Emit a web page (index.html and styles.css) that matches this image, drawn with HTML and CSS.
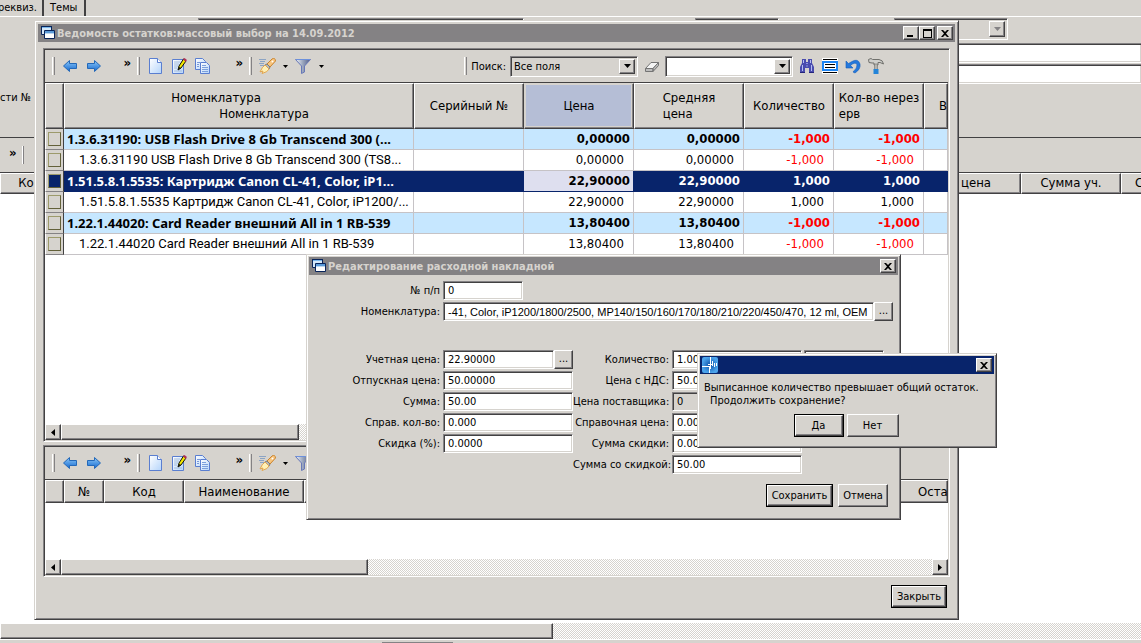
FILE: index.html
```html
<!DOCTYPE html>
<html lang="ru">
<head>
<meta charset="utf-8">
<title>Ведомость остатков</title>
<link rel="stylesheet" href="styles.css">
</head>
<body>
<svg class="sprite" aria-hidden="true">
  <defs>
    <linearGradient id="g-blue" x1="0" y1="0" x2="0" y2="1"><stop offset="0" stop-color="#8cc8f8"/><stop offset="1" stop-color="#1468d0"/></linearGradient>
    <linearGradient id="g-page" x1="0" y1="0" x2="1" y2="1"><stop offset="0" stop-color="#ffffff"/><stop offset="1" stop-color="#b4d4fa"/></linearGradient>
    <linearGradient id="g-steel" x1="0" y1="0" x2="1" y2="0"><stop offset="0" stop-color="#f0f4fa"/><stop offset=".5" stop-color="#98a4bc"/><stop offset="1" stop-color="#505c88"/></linearGradient>
    <radialGradient id="g-app"><stop offset="0" stop-color="#0c50a8"/><stop offset="1" stop-color="#4ca4ec"/></radialGradient>
  </defs>
  <symbol id="windows" viewBox="0 0 16 16"><path d="M1.500 1.500h10v8h-10z" fill="#d6e8f8" stroke="#08245a"/><path d="M1 1h11v2H1z" fill="#08245a"/><path d="M2 2h9v1H2z" fill="#7bb8ec"/><path d="M4.500 5.500h10v8h-10z" fill="#fff" stroke="#08245a"/><path d="M5 6h9v2H5z" fill="#5a9ad8"/><path d="M5 8h9v1H5z" fill="#bcd8f0"/></symbol>
  <symbol id="left" viewBox="0 0 16 16"><path d="M1.500 8L7.500 2.500V5.500H14.500V10.500H7.500V13.500Z" fill="url(#g-blue)" stroke="#2468b8"/></symbol>
  <symbol id="right" viewBox="0 0 16 16"><path d="M14.500 8L8.500 2.500V5.500H1.500V10.500H8.500V13.500Z" fill="url(#g-blue)" stroke="#2468b8"/></symbol>
  <symbol id="page" viewBox="0 0 16 16"><path d="M2.500.5H10.500L14.500 4.500V15.500H2.500Z" fill="url(#g-page)" stroke="#5a7ed0"/><path d="M10.500.5V4.500H14.500" fill="#fff" stroke="#5a7ed0"/></symbol>
  <symbol id="edit" viewBox="0 0 16 16"><path d="M1.500 1.500H12.500V15.500H1.500Z" fill="url(#g-page)" stroke="#5a7ed0"/><path d="M3 4h6M3 6h5M3 8h4M3 10h3M3 13h8" stroke="#a4bcdc"/><path d="M7 12L8 8 12.500 1 15 3 10 10Z" fill="#f4e800" stroke="#101008"/><path d="M12 1L13.500 0 16 2 14.500 4Z" fill="#b03058"/><path d="M7 12l1-3 2 1z" fill="#101008"/></symbol>
  <symbol id="copy" viewBox="0 0 16 16"><path d="M.5.5H7.500L10.500 3.500V11.500H.5Z" fill="url(#g-page)" stroke="#5a7ed0"/><path d="M2 4.500h3M2 6.500h2M2 8.500h2" stroke="#7898d8"/><path d="M5.500 4.500H11.500L14.500 7.500V15.500H5.500Z" fill="url(#g-page)" stroke="#5a7ed0"/><path d="M7 7.500h4M7 9.500h6M7 11.500h6M7 13.500h6" stroke="#7ca0dc"/></symbol>
  <symbol id="brush" viewBox="0 0 18 16"><path d="M1 1.500h7M2 3.500h5M1 5.500h5M2 7.500h4" stroke="#8ca4c4"/><path d="M9 6L14 1Q17-1 17.500 3L12 9Z" fill="#f8c47c" stroke="#c88430"/><path d="M7 7l2-1 3 3-1 2z" fill="#b4b8bc" stroke="#7c7c78"/><path d="M7 7Q4 9 2 14l3-1-1 2.500Q10 14 11 11Z" fill="#fff0b4" stroke="#e0a450"/><circle cx="14.500" cy="3.500" r="1" fill="#fff"/></symbol>
  <symbol id="funnel" viewBox="0 0 16 16"><path d="M.5 1.500H15.500L9.500 8V14L6.500 15.500V8Z" fill="url(#g-steel)" stroke="#6878b8"/><path d="M1 1.500h14" stroke="#6c90dc"/></symbol>
  <symbol id="eraser" viewBox="0 0 16 16"><path d="M1.500 10.500L7 4.500H14.500L9 10.500Z" fill="#f4f4f4" stroke="#747474"/><path d="M1.500 10.500H9V13.500H1.500ZM9 10.500L14.500 4.500V7.500L9 13.500Z" fill="#bdbdbd" stroke="#747474"/></symbol>
  <symbol id="find" viewBox="0 0 16 16"><path d="M3 1h4v3h2V1h4v4l2 4v6h-5v-5H6v5H1V9l2-4z" fill="#4a4cae"/><path d="M4.500 2v3M11.500 2v3M3.500 7v6M12.500 7v6" stroke="#b4bcf4" fill="none"/><path d="M7 5.500h2M7 8h2" stroke="#8c94e0"/><path d="M1 14.500h5M10 14.500h5" stroke="#24247c"/></symbol>
  <symbol id="list" viewBox="0 0 16 16"><path d="M0 0h16v16H0z" fill="#fff"/><path d="M1 1.500h14M1 14.500h14" stroke="#000"/><path d="M0 3h16v10H0z" fill="#1c84f4"/><path d="M2 5h12v6H2z" fill="#fff"/><path d="M3 6.500h10M3 9.500h10" stroke="#000"/></symbol>
  <symbol id="undo" viewBox="0 0 16 16"><path d="M1 3v7h7L5.500 7.500Q10 3.500 12 6.500 12.500 10 8 14L10 15Q16 11 15 6 13 0 7 3.500L3.500 5.500Z" fill="#2478dc" stroke="#145cb8" stroke-width=".6"/></symbol>
  <symbol id="hammer" viewBox="0 0 16 16"><path d="M.5 1.500L3 .5 4.500 1.500H11Q15 2 15.500 6L12 4.500H10V7H6V5H4L1 4.500Z" fill="#d0d0cc" stroke="#70706c"/><path d="M6.500 6h3v6h-3z" fill="#b4b4b0" stroke="#70706c" stroke-width=".6"/><path d="M5.500 11h5v5h-5z" fill="#2484d8"/></symbol>
  <symbol id="down" viewBox="0 0 7 4"><path d="M0 0h7L3.500 4z" fill="currentColor"/></symbol>
  <symbol id="drop" viewBox="0 0 5 3"><path d="M0 0h5L2.500 3z" fill="currentColor"/></symbol>
  <symbol id="sleft" viewBox="0 0 4 7"><path d="M4 0v7L0 3.500z"/></symbol>
  <symbol id="sright" viewBox="0 0 4 7"><path d="M0 0v7l4-3.500z"/></symbol>
  <symbol id="close" viewBox="0 0 8 7"><path d="M0 0h2l2 2 2-2h2L5 3.500 8 7H6L4 5 2 7H0l3-3.500z"/></symbol>
  <symbol id="min" viewBox="0 0 8 7"><path d="M0 5h6v2H0z"/></symbol>
  <symbol id="max" viewBox="0 0 9 9"><path d="M0 0h9v9H0zM1 2v6h7V2z" fill-rule="evenodd"/></symbol>
  <symbol id="app" viewBox="0 0 16 16"><rect width="16" height="16" rx="2" fill="url(#g-app)"/><path d="M8.500 0v5M7.500 10v6M0 9.500h7M6 7.500h4M5 9.500h3M8.500 5v7M10.500 4v5M12.500 6v4M14.500 6v3" stroke="#fff" fill="none"/></symbol>
</svg>

<main class="app">
  <nav class="tabs">
    <a class="tab tab-cut" href="#rekviz"><span>реквиз.</span></a>
    <a class="tab" href="#themes">Темы</a>
  </nav>
  <section class="doc-form">
    <span class="doc-label">сти №</span>
    <div class="doc-fields">
      <div class="doc-row">
        <div class="field combo off doc-a"><select disabled aria-label="Вид"><option></option></select><span class="btn arrow"><svg><use href="#down"/></svg></span></div>
        <div class="field off doc-b"></div>
        <div class="field combo off doc-c"><select disabled aria-label="Валюта"><option></option></select><span class="btn arrow"><svg><use href="#down"/></svg></span></div>
      </div>
      <input class="field doc-line" aria-label="Основание">
      <input class="field doc-line" aria-label="Примечание">
    </div>
  </section>
  <div class="doc-tools"><b>»</b><i class="grip"></i></div>
  <div class="doc-head"><span class="hd doc-code">Ко</span><span class="hd doc-price">цена</span><span class="hd doc-sum">Сумма уч.</span><span class="hd doc-rest">С</span></div>
  <div class="doc-body"></div>
  <div class="scroll"><span class="thumb doc-thumb"></span></div>
  <footer class="status"><span></span></footer>
</main>

<section class="window main-window">
  <header class="title"><svg class="ico"><use href="#windows"/></svg><h1>Ведомость остатков:массовый выбор на 14.09.2012</h1>
    <button class="btn cap" aria-label="Свернуть"><svg class="g8"><use href="#min"/></svg></button><button class="btn cap" aria-label="Развернуть"><svg class="g9"><use href="#max"/></svg></button><button class="btn cap cap-close" aria-label="Закрыть окно"><svg class="g8"><use href="#close"/></svg></button>
  </header>
  <div class="main-content">
    <div class="panel">
      <div class="toolbar">
        <i class="grip"></i><button class="tool" aria-label="Назад"><svg><use href="#left"/></svg></button><button class="tool" aria-label="Вперёд"><svg><use href="#right"/></svg></button><button class="more" aria-label="Ещё">»</button>
        <i class="grip"></i><button class="tool" aria-label="Создать"><svg><use href="#page"/></svg></button><button class="tool" aria-label="Изменить"><svg><use href="#edit"/></svg></button><button class="tool" aria-label="Копировать"><svg><use href="#copy"/></svg></button><button class="more more-wide" aria-label="Ещё">»</button>
        <i class="grip"></i><button class="tool" aria-label="Очистить"><svg class="w18"><use href="#brush"/></svg></button><button class="drop" aria-label="Варианты очистки"><svg><use href="#drop"/></svg></button><button class="tool" aria-label="Фильтр"><svg><use href="#funnel"/></svg></button><button class="drop" aria-label="Варианты фильтра"><svg><use href="#drop"/></svg></button>
        <div class="search">
          <i class="grip"></i><label for="where">Поиск:</label>
          <div class="field combo off"><select id="where"><option>Все поля</option></select><span class="btn arrow"><svg><use href="#down"/></svg></span></div>
          <button class="tool erase" aria-label="Стереть"><svg><use href="#eraser"/></svg></button>
          <div class="field combo"><input aria-label="Что искать"><button class="btn arrow" aria-label="Список"><svg><use href="#down"/></svg></button></div>
          <button class="tool" aria-label="Найти"><svg><use href="#find"/></svg></button><button class="tool" aria-label="Строки"><svg><use href="#list"/></svg></button><button class="tool" aria-label="Отменить"><svg><use href="#undo"/></svg></button><button class="tool" aria-label="Настройки"><svg><use href="#hammer"/></svg></button>
        </div>
      </div>
      <div class="grid-area">
        <table class="grid">
          <colgroup><col class="c-mark"><col class="c-name"><col class="c-num"><col class="c-num"><col class="c-num"><col class="c-qty"><col class="c-qty"><col class="c-rest"></colgroup>
          <thead><tr><th class="hd"></th><th class="hd"><span class="shift-l">Номенклатура</span><span class="shift-r">Номенклатура</span></th><th class="hd">Серийный №</th><th class="hd current">Цена</th><th class="hd"><span class="lines">Средняя<br>цена</span></th><th class="hd">Количество</th><th class="hd"><span class="lines">Кол-во нерез<br>ерв</span></th><th class="hd last">Вы</th></tr></thead>
          <tbody>
            <tr class="group"><td class="mark"><i></i></td><td class="name">1.3.6.31190: USB Flash Drive 8 Gb Transcend 300 (...</td><td></td><td class="n">0,00000</td><td class="n">0,00000</td><td class="n neg">-1,000</td><td class="n neg">-1,000</td><td></td></tr>
            <tr><td class="mark"><i></i></td><td class="name sub">1.3.6.31190 USB Flash Drive 8 Gb Transcend 300 (TS8...</td><td></td><td class="n">0,00000</td><td class="n">0,00000</td><td class="n neg">-1,000</td><td class="n neg">-1,000</td><td></td></tr>
            <tr class="group selected"><td class="mark"><i></i></td><td class="name">1.51.5.8.1.5535: Картридж Canon CL-41, Color, iP1...</td><td></td><td class="n focus">22,90000</td><td class="n">22,90000</td><td class="n">1,000</td><td class="n">1,000</td><td></td></tr>
            <tr><td class="mark"><i></i></td><td class="name sub">1.51.5.8.1.5535 Картридж Canon CL-41, Color, iP1200/...</td><td></td><td class="n">22,90000</td><td class="n">22,90000</td><td class="n">1,000</td><td class="n">1,000</td><td></td></tr>
            <tr class="group"><td class="mark"><i></i></td><td class="name">1.22.1.44020: Card Reader внешний All in 1 RB-539</td><td></td><td class="n">13,80400</td><td class="n">13,80400</td><td class="n neg">-1,000</td><td class="n neg">-1,000</td><td></td></tr>
            <tr><td class="mark"><i></i></td><td class="name sub">1.22.1.44020 Card Reader внешний All in 1 RB-539</td><td></td><td class="n">13,80400</td><td class="n">13,80400</td><td class="n neg">-1,000</td><td class="n neg">-1,000</td><td></td></tr>
          </tbody>
        </table>
      </div>
      <div class="scroll"><button class="btn step" aria-label="Влево"><svg><use href="#sleft"/></svg></button><span class="thumb thumb-a"></span><button class="btn step step-end" aria-label="Вправо"><svg><use href="#sright"/></svg></button></div>
    </div>
    <div class="panel">
      <div class="toolbar">
        <i class="grip"></i><button class="tool" aria-label="Назад"><svg><use href="#left"/></svg></button><button class="tool" aria-label="Вперёд"><svg><use href="#right"/></svg></button><button class="more" aria-label="Ещё">»</button>
        <i class="grip"></i><button class="tool" aria-label="Создать"><svg><use href="#page"/></svg></button><button class="tool" aria-label="Изменить"><svg><use href="#edit"/></svg></button><button class="tool" aria-label="Копировать"><svg><use href="#copy"/></svg></button><button class="more more-wide" aria-label="Ещё">»</button>
        <i class="grip"></i><button class="tool" aria-label="Очистить"><svg class="w18"><use href="#brush"/></svg></button><button class="drop" aria-label="Варианты очистки"><svg><use href="#drop"/></svg></button><button class="tool" aria-label="Фильтр"><svg><use href="#funnel"/></svg></button>
      </div>
      <div class="grid-area">
        <table class="grid grid-low">
          <colgroup><col class="c-mark"><col class="c-no"><col class="c-code"><col class="c-title"><col><col class="c-tail"></colgroup>
          <thead><tr><th class="hd"></th><th class="hd">№</th><th class="hd">Код</th><th class="hd">Наименование</th><th class="hd"></th><th class="hd tail">Оста</th></tr></thead>
        </table>
      </div>
      <div class="scroll"><button class="btn step" aria-label="Влево"><svg><use href="#sleft"/></svg></button><span class="thumb thumb-b"></span><button class="btn step step-end" aria-label="Вправо"><svg><use href="#sright"/></svg></button></div>
    </div>
    <div class="actions"><button class="default"><span class="btn">Закрыть</span></button></div>
  </div>
</section>

<section class="window edit-window">
  <header class="title"><svg class="ico"><use href="#windows"/></svg><h2>Редактирование расходной накладной</h2><button class="btn cap cap-close" aria-label="Закрыть окно"><svg class="g8"><use href="#close"/></svg></button></header>
  <form class="form">
    <div class="form-top">
      <label for="num">№ п/п</label><input id="num" class="field num" value="0">
      <label for="item">Номенклатура:</label><div class="pick"><input id="item" class="field item" value="-41, Color, iP1200/1800/2500, MP140/150/160/170/180/210/220/450/470, 12 ml, OEM"><button type="button" class="btn dots" aria-label="Выбрать номенклатуру">...</button></div>
    </div>
    <div class="form-cols">
      <label for="f1">Учетная цена:</label><div class="pick"><input id="f1" class="field" value="22.90000"><button type="button" class="btn dots" aria-label="Выбрать цену">...</button></div>
      <label for="q1">Количество:</label><input id="q1" class="field" value="1.000"><div class="field combo unit"><select aria-label="Единица"><option></option></select><span class="btn arrow"><svg><use href="#down"/></svg></span></div>
      <label for="f2">Отпускная цена:</label><input id="f2" class="field" value="50.00000"><label for="q2">Цена с НДС:</label><input id="q2" class="field" value="50.00000">
      <label for="f3">Сумма:</label><input id="f3" class="field" value="50.00"><label for="q3">Цена поставщика:</label><input id="q3" class="field off" value="0" readonly>
      <label for="f4">Справ. кол-во:</label><input id="f4" class="field" value="0.000"><label for="q4">Справочная цена:</label><input id="q4" class="field" value="0.00000">
      <label for="f5">Скидка (%):</label><input id="f5" class="field" value="0.0000"><label for="q5">Сумма скидки:</label><input id="q5" class="field" value="0.00">
      <label class="second" for="q6">Сумма со скидкой:</label><input id="q6" class="field" value="50.00">
    </div>
    <div class="form-actions"><button type="button" class="default"><span class="btn">Сохранить</span></button><button type="button" class="btn push">Отмена</button></div>
  </form>
</section>

<section class="window message" role="alertdialog" aria-labelledby="msg">
  <header class="title active"><svg class="ico"><use href="#app"/></svg><button class="btn cap cap-close" aria-label="Закрыть окно"><svg class="g8"><use href="#close"/></svg></button></header>
  <p id="msg" class="msg">Выписанное количество превышает общий остаток.<br><span>Продолжить сохранение?</span></p>
  <div class="msg-actions"><button class="default"><span class="btn">Да</span></button><button class="btn push">Нет</button></div>
</section>
</body>
</html>
```

FILE: styles.css
```css
:root {
  --face: #d6d3ce;
  --shade: #848284;
  --dark: #424142;
  --navy: #08246b;
}
* { box-sizing: border-box; }
body {
  margin: 0;
  height: 100vh;
  overflow: hidden;
  position: relative;
  background: var(--face);
  color: #000;
  font: 11px/13px "DejaVu Sans Condensed", "Noto Sans", sans-serif;
}
h1, h2, p { margin: 0; font-size: inherit; }
svg { display: block; flex: none; }
button, input, select { font: inherit; color: inherit; margin: 0; padding: 0; border: 0; background: none; border-radius: 0; outline: 0; }
select { appearance: none; opacity: 1; }
.sprite { position: absolute; width: 0; height: 0; }

/* Raised and sunken surfaces */
.btn {
  display: flex;
  align-items: center;
  justify-content: center;
  background: var(--face);
  border: 1px solid;
  border-color: #fff var(--dark) var(--dark) #fff;
  box-shadow: inset -1px -1px var(--shade);
}
.field {
  border: 1px solid;
  border-color: var(--shade) #fff #fff var(--shade);
  box-shadow: inset 1px 1px var(--dark), inset -1px -1px var(--face);
  background: #fff;
  height: 19px;
  min-width: 0;
  padding: 0 4px;
}
.off { background: var(--face); }
.combo { display: flex; height: 21px; padding: 2px; }
.combo select, .combo input { flex: 1; min-width: 0; padding-left: 1px; }
.arrow { width: 16px; flex: none; }
.arrow svg { width: 7px; height: 4px; }
.doc-row .arrow { color: var(--shade); }
.default { border: 1px solid #000; display: flex; height: 23px; }
.default .btn { flex: 1; align-self: stretch; }
.push { height: 23px; }
.grip { width: 3px; height: 18px; border-left: 1px solid #fff; border-right: 1px solid var(--shade); flex: none; }
.hd {
  background: var(--face);
  border: 1px solid;
  border-color: #fff var(--dark) var(--dark) #fff;
  box-shadow: inset -1px -1px var(--shade);
  font-size: 13px;
  line-height: 16px;
  font-weight: normal;
}

/* Document behind the windows */
.app { height: 100%; display: flex; flex-direction: column; }
.tabs { display: flex; height: 17px; border-bottom: 1px solid #fff; }
.tab { color: inherit; text-decoration: none; width: 42px; padding-left: 6px; line-height: 16px; border-right: 2px solid var(--dark); }
.tab-cut { width: 44px; padding: 0 5px 0 0; display: flex; justify-content: flex-end; }
.doc-form { display: flex; height: 120px; padding-top: 1px; }
.doc-label { width: 198px; padding-top: 73px; }
.doc-fields { flex: 1; display: flex; flex-direction: column; }
.doc-row { display: flex; height: 25px; }
.doc-row .field { height: 22px; }
.doc-a { width: 326px; }
.doc-b { width: 84px; margin-left: 171px; }
.doc-c { width: 114px; margin-left: 115px; }
.doc-line { height: 20px; margin-bottom: 1px; border-right: 0; }
.doc-tools { display: flex; gap: 5px; height: 35px; border-top: 1px solid var(--dark); padding: 8px 0 0 9px; font-size: 13px; }
.doc-tools .grip { width: 2px; }
.doc-head { display: flex; height: 22px; border-top: 1px solid var(--dark); overflow: hidden; }
.doc-head .hd { line-height: 18px; flex: none; text-align: center; }
.doc-code { width: 52px; }
.doc-head .doc-price { flex: 0 0 969px; text-align: right; padding-right: 29px; }
.doc-sum { width: 100px; }
.doc-head .doc-rest { width: 60px; text-align: left; padding-left: 13px; }
.doc-body { flex: 1; background: #fff; }
.status { height: 4px; border-top: 1px solid #fff; padding: 2px 0 0 382px; }
.status span { display: block; width: 71px; height: 1px; background: var(--shade); }

/* Scroll bars */
.scroll { display: flex; height: 16px; flex: none; background: repeating-conic-gradient(#fff 0 25%, var(--face) 0 50%) 0 0 / 2px 2px; }
.thumb { background: var(--face); border: 1px solid; border-color: #fff var(--dark) var(--dark) #fff; box-shadow: inset -1px -1px var(--shade); }
.doc-thumb { width: 553px; }
.thumb-a { width: 238px; }
.thumb-b { width: 307px; }
.step { width: 16px; flex: none; }
.step svg { width: 4px; height: 7px; }
.step-end { margin-left: auto; }

/* Windows */
.window {
  position: absolute;
  background: var(--face);
  border: 1px solid;
  border-color: var(--face) var(--dark) var(--dark) var(--face);
  box-shadow: inset 1px 1px #fff, inset -1px -1px var(--shade);
  padding: 2px;
  display: flex;
  flex-direction: column;
}
.title { display: flex; align-items: center; height: 18px; flex: none; background: var(--shade); color: var(--face); padding: 0 2px; }
.title .ico { width: 16px; height: 16px; }
.active { background: var(--navy); }
.title h1, .title h2 { font-weight: bold; white-space: nowrap; padding-left: 1px; margin-right: auto; }
.cap { width: 16px; height: 14px; color: #000; flex: none; }
.cap-close { margin-left: 2px; }
.active .cap-close { margin-left: auto; }
.g8 { width: 8px; height: 7px; }
.g9 { width: 9px; height: 9px; }
.main-window { left: 34px; top: 20px; width: 925px; height: 600px; padding: 3px; }
.main-content { flex: 1; display: grid; grid-template-rows: minmax(0, 394fr) minmax(0, 132fr) auto; padding: 6px 5px 8px; gap: 3px; min-height: 0; }
.panel {
  border: 1px solid;
  border-color: var(--shade) #fff #fff var(--shade);
  display: flex;
  flex-direction: column;
  padding: 1px;
  background: var(--face);
  box-shadow: inset 1px 1px var(--dark);
  min-width: 0;
}
.toolbar { display: flex; align-items: center; height: 32px; flex: none; padding-left: 7px; }
.tool { width: 24px; height: 24px; display: flex; align-items: center; justify-content: center; flex: none; }
.tool svg { width: 16px; height: 16px; }
.tool svg.w18 { width: 18px; }
.grip + .tool { margin-left: 3px; }
.more { width: 25px; height: 18px; margin-right: 6px; text-align: right; font-weight: bold; font-size: 13px; line-height: 10px; padding-bottom: 6px; }
.more-wide { width: 28px; }
.drop { width: 12px; height: 24px; display: flex; align-items: center; justify-content: center; }
.drop svg { width: 5px; height: 3px; }
.search { display: flex; align-items: center; margin-left: auto; padding-right: 61px; }
.search label { padding: 0 4px; }
.search .combo { width: 128px; }
.search .tool { width: 23px; }
.search .erase { width: 27px; }
.search .combo + .tool:not(.erase) { margin-left: 2px; }

.grid-area { flex: 1; background: #fff; overflow: hidden; border-top: 1px solid var(--dark); min-height: 0; }
.grid { width: 100%; table-layout: fixed; border-collapse: separate; border-spacing: 0; font-size: 13px; line-height: 16px; }
.grid .name { font-family: "Noto Sans", sans-serif; }
.grid th { height: 46px; padding: 0; }
.grid .current { background: #b5bed6; border-color: var(--face) var(--dark) var(--dark) var(--face); box-shadow: inset -1px -1px var(--shade), inset 1px 1px var(--face), inset -2px -2px var(--face); }
.c-mark { width: 19px; }
.c-name { width: 350px; }
.c-num { width: 110px; }
.c-qty { width: 90px; }
.shift-l { display: block; padding-right: 46px; }
.shift-r { display: block; padding-left: 50px; }
.lines { display: inline-block; text-align: left; white-space: nowrap; }
.grid .last { text-align: left; padding-left: 14px; overflow: hidden; }
.grid td { height: 21px; padding: 0 0 0 3px; border: solid #c6c3c6; border-width: 0 1px 1px 0; white-space: nowrap; overflow: hidden; }
.grid .sub { padding-left: 15px; font-family: Roboto, sans-serif; }
.grid .n { text-align: right; padding-right: 9px; }
.group td { background: #c6e7ff; font-weight: bold; }
.grid .group .n { padding-right: 3px; }
.grid .neg { color: #f00; }
.grid .selected td { background: var(--navy); border-color: var(--navy); color: #fff; }
.grid .selected .focus { background: #dedfef; color: #000; }
.grid .mark, .grid .selected .mark { background: var(--face); padding: 2px; border-color: var(--shade) var(--dark) var(--shade) #fff; border-width: 0 1px 1px 1px; }
.mark i { display: block; width: 13px; height: 14px; border: 1px solid; border-color: #9c9a6b #63613a #63613a #9c9a6b; }
.selected .mark i { background: var(--navy); }
.grid-low th { height: 23px; }
.c-no { width: 40px; }
.c-code { width: 80px; }
.c-title { width: 120px; }
.c-tail { width: 60px; }
.grid .tail { text-align: left; padding-left: 29px; overflow: hidden; }
.actions { display: flex; justify-content: flex-end; padding: 5px 3px 0 0; }
.actions .default { width: 56px; }

/* Invoice line editor */
.edit-window { left: 306px; top: 254px; width: 595px; height: 266px; }
.form { display: flex; flex-direction: column; flex: 1; padding: 6px 5px 10px 14px; }
.form label { text-align: right; white-space: nowrap; padding-right: 3px; }
.form-top { display: grid; grid-template-columns: 120px 1fr; row-gap: 2px; align-items: center; }
.num { width: 80px; }
.item { font-family: "Liberation Sans", Arial, sans-serif; }
.pick { display: flex; }
.pick .field { flex: 1; }
.dots { width: 19px; height: 19px; flex: none; padding-bottom: 3px; }
.form-cols { display: grid; grid-template-columns: 120px 130px 99px 130px 82px; row-gap: 2px; align-items: center; margin-top: 29px; }
.form-cols > label:nth-of-type(odd):not(.second) { grid-column: 1; }
.form-cols .second { grid-column: 3; }
.unit { margin-left: 2px; height: 19px; }
.form-actions { display: flex; justify-content: flex-end; gap: 5px; margin-top: auto; padding-right: 5px; }
.form-actions .default { width: 67px; }
.form-actions .push { width: 50px; }

/* Confirmation */
.message { left: 697px; top: 353px; width: 300px; }
.msg { padding: 7px 4px 7px; white-space: nowrap; }
.msg span { padding-left: 6px; }
.msg-actions { display: flex; justify-content: center; gap: 3px; padding: 0 2px 8px 0; }
.msg-actions .default { width: 50px; }
.msg-actions .push { width: 52px; }
```
